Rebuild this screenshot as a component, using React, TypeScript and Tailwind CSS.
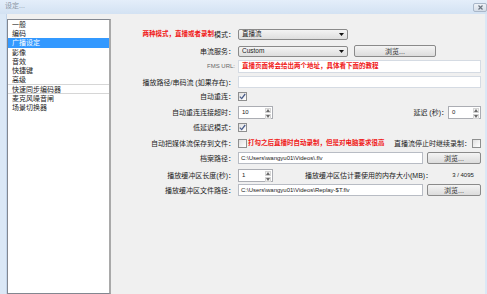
import React from 'react';

const listItems = [
  '一般',
  '编码',
  '广播设定',
  '影像',
  '音效',
  '快捷键',
  '高级',
  '快速同步编码器',
  '麦克风噪音闸',
  '场景切换器',
];

const Check = ({ checked }: { checked?: boolean }) => (
  <div className="w-[9px] h-[9px] shrink-0 border border-[#8e8f8f] bg-gradient-to-br from-[#e0e0e0] to-white flex items-center justify-center">
    {checked && (
      <svg width="7" height="7" viewBox="0 0 7 7">
        <path d="M0.8 3.6 L2.7 5.6 L6.2 1" stroke="#4a5d8a" strokeWidth="1.3" fill="none" />
      </svg>
    )}
  </div>
);

const Arrow = ({ up }: { up?: boolean }) => (
  <svg width="4" height="3" viewBox="0 0 4 3">
    <path d={up ? 'M0 3 L2 0 L4 3 Z' : 'M0 0 L4 0 L2 3 Z'} fill="#6a6a6a" />
  </svg>
);

const Spin = ({ value, className }: { value: string; className: string }) => (
  <div className={`flex h-[13px] border border-[#abadb3] bg-white ${className}`}>
    <span className="flex-1 pl-[3px] text-[6px] leading-[11px] text-[#222]">{value}</span>
    <div className="flex flex-col w-[8px] gap-px p-px">
      <div className="flex-1 border border-[#d4d4d4] bg-[#f4f4f4] flex items-center justify-center">
        <Arrow up />
      </div>
      <div className="flex-1 border border-[#d4d4d4] bg-[#f4f4f4] flex items-center justify-center">
        <Arrow />
      </div>
    </div>
  </div>
);

const Combo = ({ value }: { value: string }) => (
  <div className="flex items-center w-[110px] h-[11px] border border-[#8a8a8a] rounded-[2px] bg-gradient-to-b from-[#f4f4f4] to-[#dedede] pl-[3px] pr-[3px]">
    <span className="flex-1 text-[6.5px] leading-none text-[#222]">{value}</span>
    <svg width="5" height="3" viewBox="0 0 5 3">
      <path d="M0 0 L5 0 L2.5 3 Z" fill="#111" />
    </svg>
  </div>
);

const Browse = ({ className }: { className: string }) => (
  <div className={`h-[12px] border border-[#8a8a8a] rounded-[2px] bg-gradient-to-b from-[#f4f4f4] to-[#dcdcdc] flex items-center justify-center text-[7px] leading-none text-[#333] ${className}`}>
    浏览...
  </div>
);

const Field = ({ value, className, children }: { value?: string; className: string; children?: React.ReactNode }) => (
  <div className={`border border-[#b8bcc4] bg-white flex items-center pl-[2px] text-[6px] leading-none text-[#222] ${className}`}>
    {value}
    {children}
  </div>
);

const Row = ({ label, extra, className, children }: { label?: React.ReactNode; extra?: React.ReactNode; className: string; children?: React.ReactNode }) => (
  <div className={`flex items-center h-[14px] ${className}`}>
    <div className="w-[124px] shrink-0 flex justify-end items-center text-[7px] leading-none text-[#222] whitespace-nowrap">
      {extra}
      {label}
    </div>
    <div className="flex-1 flex items-center pl-[3px]">{children}</div>
  </div>
);

const Red = ({ children, className }: { children: React.ReactNode; className?: string }) => (
  <span className={`text-[6.5px] leading-none font-bold text-[#f01818] whitespace-nowrap ${className ?? ''}`}>{children}</span>
);

export default function App() {
  return (
    <div className="w-[487px] h-[294px] overflow-hidden flex flex-col bg-[#d8e6f5] font-['Liberation_Sans','Noto_Sans_CJK_SC',sans-serif]">
      {/* title bar */}
      <div className="h-[14px] shrink-0 flex items-start bg-gradient-to-b from-[#e4eefa] to-[#d3e2f3]">
        <span className="pl-[5px] pt-[2px] text-[7px] leading-none text-[#8a95a3]">设定...</span>
        <div className="ml-auto mt-[3px] w-[14px] h-[9px] border border-[#a9b7c9] rounded-[2px] bg-gradient-to-b from-[#eef2f7] to-[#d5dde8] flex items-center justify-center">
          <svg width="5" height="5" viewBox="0 0 5 5">
            <path d="M0.5 0.5 L4.5 4.5 M4.5 0.5 L0.5 4.5" stroke="#6b7480" strokeWidth="1.2" />
          </svg>
        </div>
      </div>

      <div className="flex flex-1 min-h-0">
        <div className="w-[7px] shrink-0 bg-[#dbe8f6] border-r border-[#c3d5ea]" />
        <div className="flex flex-1 bg-[#f0f0f0]">
          {/* category list */}
          <div className="w-[104px] shrink-0 mt-[5px] bg-white border border-[#828790] border-r-2 border-r-[#a9a9a9]">
            {listItems.map((item, i) => (
              <div
                key={item}
                className={`h-[9.2px] pl-[4px] text-[7px] leading-[9.2px] whitespace-nowrap ${
                  i === 2
                    ? 'bg-[#3399ff] text-white'
                    : i === 7
                    ? 'text-[#222] border-y border-[#d6d6d6] leading-[7.2px]'
                    : 'text-[#222]'
                }`}
              >
                {item}
              </div>
            ))}
          </div>

          {/* settings panel */}
          <div className="flex-1 flex flex-col pt-[13px] pr-[4px]">
            <Row label="模式：" extra={<Red>两种模式，直播或者录制</Red>} className="">
              <Combo value="直播流" />
            </Row>
            <Row label="串流服务：" className="mt-[3px]">
              <Combo value="Custom" />
              <Browse className="w-[82px] ml-[6px]" />
            </Row>
            <Row label={<span className="text-[6px] text-[#666]">FMS URL:</span>} className="mt-[1px]">
              <Field className="flex-1 h-[13px] border-[#d5dbe3]">
                <Red className="pl-px">直播页面将会给出两个地址，具体看下面的教程</Red>
              </Field>
            </Row>
            <Row label="播放路径/串码流 (如果存在)：" className="mt-[2px]">
              <Field className="flex-1 h-[12px] border-[#d5dbe3]" />
            </Row>
            <Row label="自动重连：" className="">
              <Check checked />
            </Row>
            <Row label="自动重连连接超时：" className="mt-[2px]">
              <Spin value="10" className="w-[35px]" />
              <span className="ml-auto text-[7px] leading-none text-[#222] whitespace-nowrap">延迟 (秒)：</span>
              <Spin value="0" className="w-[33px]" />
            </Row>
            <Row label="低延迟模式：" className="mt-[1px]">
              <Check checked />
            </Row>
            <Row label="自动把媒体流保存到文件：" className="mt-[2px]">
              <Check />
              <Red className="ml-px">打勾之后直播时自动录制，但是对电脑要求很高</Red>
              <span className="ml-auto text-[7px] leading-none text-[#222] whitespace-nowrap">直播流停止时继续录制：</span>
              <div className="ml-px">
                <Check />
              </div>
            </Row>
            <Row label="档案路径：" className="mt-[1px]">
              <Field value="C:\Users\wangyu01\Videos\.flv" className="w-[185px] h-[12px]" />
              <Browse className="w-[54px] ml-[4px]" />
            </Row>
            <Row label="播放缓冲区长度(秒)：" className="mt-[3px]">
              <Spin value="1" className="w-[35px]" />
              <span className="ml-[32px] text-[7px] leading-none text-[#222] whitespace-nowrap">
                播放缓冲区估计要使用的内存大小(MB)：
              </span>
              <span className="ml-[20px] text-[6px] leading-none text-[#222]">3 / 4095</span>
            </Row>
            <Row label="播放缓冲区文件路径：" className="mt-[1px]">
              <Field value="C:\Users\wangyu01\Videos\Replay-$T.flv" className="w-[185px] h-[12px]" />
              <Browse className="w-[54px] ml-[4px]" />
            </Row>
          </div>
        </div>
        <div className="w-[2px] shrink-0 bg-[#dbe8f6]" />
      </div>
    </div>
  );
}
